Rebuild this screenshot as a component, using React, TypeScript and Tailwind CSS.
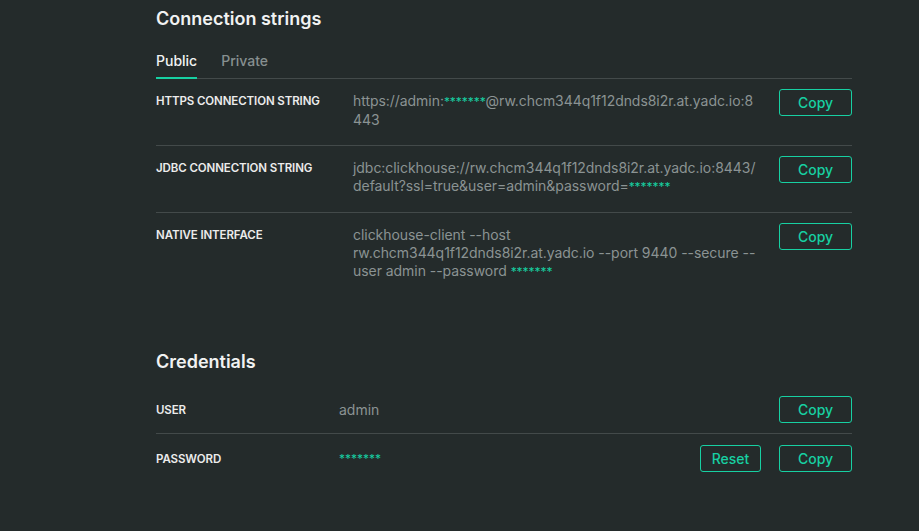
import React from "react";

const GREEN = "text-[#17d0a2]";

function Stars() {
  return <span className={`${GREEN} text-[12px]`}>*******</span>;
}

function CopyButton({ label = "Copy", w = "w-[73px]" }: { label?: string; w?: string }) {
  return (
    <button
      className={`${w} h-[27px] shrink-0 rounded-[3px] border border-[#17d0a2] text-[14px] font-medium text-[#17d0a2] flex items-center justify-center`}
    >
      {label}
    </button>
  );
}

const connRows: { label: string; value: React.ReactNode }[] = [
  {
    label: "HTTPS CONNECTION STRING",
    value: (
      <>
        https://admin:<Stars />@rw.chcm344q1f12dnds8i2r.at.yadc.io:8443
      </>
    ),
  },
  {
    label: "JDBC CONNECTION STRING",
    value: (
      <>
        jdbc:clickhouse://rw.chcm344q1f12dnds8i2r.at.yadc.io:8443/<wbr />default?ssl=true&user=admin&password=
        <Stars />
      </>
    ),
  },
  {
    label: "NATIVE INTERFACE",
    value: (
      <>
        clickhouse-client --host
        <br />
        rw.chcm344q1f12dnds8i2r.at.yadc.io --port 9440 --secure --
        <br />
        user admin --password <Stars />
      </>
    ),
  },
];

const labelCls = "shrink-0 text-[11.5px] leading-[18px] font-semibold tracking-[-0.1px] text-[#ececec]";

export default function App() {
  return (
    <div
      className="min-h-[531px] w-full bg-[#242b2b] pl-[156px] pt-[5px]"
      style={{ fontFamily: "Inter, 'Liberation Sans', sans-serif" }}
    >
      <div className="w-[696px]">
        <h2 className="text-[18px] leading-[28px] font-semibold text-[#f1f2f2]">Connection strings</h2>

        {/* tabs */}
        <div className="mt-[18px] flex gap-[24px] border-b border-[#434a4a] text-[14px] leading-[20px]">
          <div className="-mb-px pb-[6px] border-b-2 border-[#17d0a2] font-medium text-[#f1f2f2]">Public</div>
          <div className="-mb-px pb-[6px] font-medium text-[#879090]">Private</div>
        </div>

        {connRows.map((r, i) => (
          <div
            key={r.label}
            className={`flex items-start pt-[10px] pb-[16px] ${i < connRows.length - 1 ? "border-b border-[#434a4a]" : ""}`}
          >
            <div className={`w-[197px] pt-[3px] ${labelCls}`}>{r.label}</div>
            <div className="w-[404px] pt-[3px] text-[14px] leading-[18px] tracking-[-0.05px] text-[#8b9393] break-words">
              {r.value}
            </div>
            <div className="ml-auto">
              <CopyButton />
            </div>
          </div>
        ))}

        <h2 className="mt-[51px] mb-[9px] text-[18px] leading-[28px] font-semibold text-[#f1f2f2]">Credentials</h2>

        <div className="flex items-center pt-[11px] pb-[10px] border-b border-[#434a4a]">
          <div className={`w-[183px] ${labelCls}`}>USER</div>
          <div className="text-[14px] leading-[18px] text-[#8b9393]">admin</div>
          <div className="ml-auto">
            <CopyButton />
          </div>
        </div>
        <div className="flex items-center pt-[11px] pb-[10px]">
          <div className={`w-[183px] ${labelCls}`}>PASSWORD</div>
          <div className="text-[14px] leading-[18px]">
            <Stars />
          </div>
          <div className="ml-auto flex gap-[18px]">
            <CopyButton label="Reset" w="w-[61px]" />
            <CopyButton />
          </div>
        </div>
      </div>
    </div>
  );
}
